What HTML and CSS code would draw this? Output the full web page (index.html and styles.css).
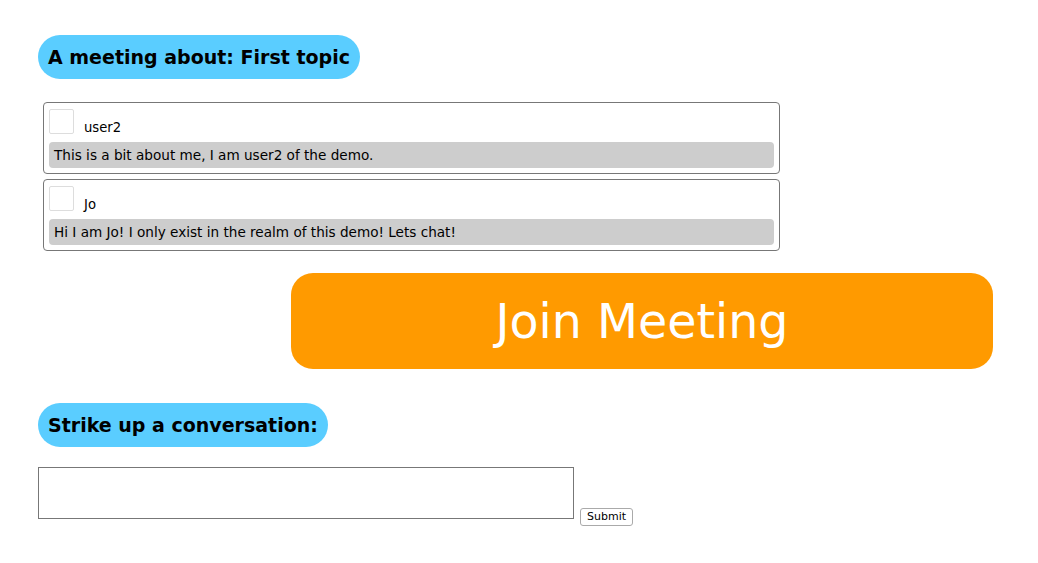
FILE: index.html
```html
<!DOCTYPE html>
<html>
<head>
<meta charset="utf-8">
<link rel="stylesheet" href="styles.css">
</head>
<body>
<div class="page">
  <h2 class="pill">A meeting about: First topic</h2>
  <div class="cards">
    <div class="card">
      <div class="who"><span class="avatar"></span><span class="name">user2</span></div>
      <div class="bio">This is a bit about me, I am user2 of the demo.</div>
    </div>
    <div class="card">
      <div class="who"><span class="avatar"></span><span class="name">Jo</span></div>
      <div class="bio">Hi I am Jo! I only exist in the realm of this demo! Lets chat!</div>
    </div>
  </div>
  <div class="join-row"><button class="join">Join Meeting</button></div>
  <h2 class="pill">Strike up a conversation:</h2>
  <form class="chat">
    <textarea class="msg"></textarea>
    <button type="button" class="submit">Submit</button>
  </form>
</div>
</body>
</html>
```

FILE: styles.css
```css
html, body { margin: 0; padding: 0; background: #fff; }
body { font-family: "DejaVu Sans", "Verdana", sans-serif; color: #000; }
.page { padding: 35px 0 40px 38px; display: flex; flex-direction: column; align-items: flex-start; }
.pill {
  margin: 0;
  background: #5acdff;
  border-radius: 22px;
  height: 44px;
  box-sizing: border-box;
  padding: 0 10px;
  font-size: 19px;
  font-weight: bold;
  line-height: 44px;
}
.cards { margin: 23px 0 0 5px; display: flex; flex-direction: column; gap: 5px; width: 737px; }
.card {
  border: 1px solid #777;
  border-radius: 4px;
  padding: 5px;
  box-sizing: border-box;
  height: 72px;
}
.who { display: flex; align-items: flex-end; height: 26px; }
.avatar { width: 23px; height: 23px; border: 1px solid #ddd; border-radius: 2px; display: inline-block; }
.name { font-size: 13.2px; margin-left: 10px; line-height: 15px; margin-bottom: -1px; }
.bio {
  margin-top: 8px;
  background: #cdcdcd;
  border-radius: 4px;
  height: 26px;
  line-height: 26px;
  padding-left: 5px;
  font-size: 13.6px;
}
.join-row { margin-top: 22px; margin-left: 253px; }
.join {
  width: 702px; height: 96px;
  background: #ff9a00;
  border: none;
  border-radius: 22px;
  color: #fff;
  font-family: "DejaVu Sans", sans-serif;
  font-size: 47.5px;
  padding: 0;
}
.join-row + .pill { margin-top: 34px; }
.chat { margin-top: 20px; display: flex; align-items: flex-start; gap: 6px; }
.msg { width: 536px; height: 52px; box-sizing: border-box; border: 1px solid #777; margin: 0; resize: none; }
.submit {
  margin-top: 41px;
  font-family: "DejaVu Sans", sans-serif;
  font-size: 11px;
  line-height: 16px;
  height: 18px;
  padding: 0 6px;
  background: #fff;
  border: 1px solid #aaa;
  border-radius: 3px;
  color: #000;
}
```
